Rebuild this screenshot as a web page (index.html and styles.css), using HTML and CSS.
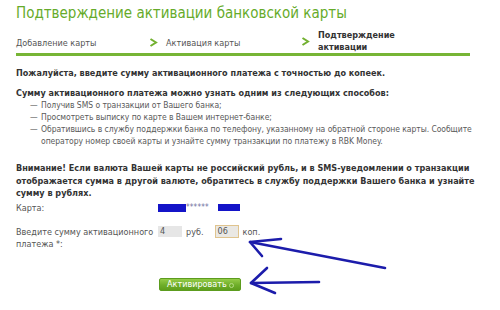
FILE: index.html
```html
<!DOCTYPE html>
<html lang="ru">
<head>
<meta charset="utf-8">
<title>Подтверждение активации банковской карты</title>
<link rel="stylesheet" href="styles.css">
</head>
<body>
<div class="page">
  <h1 class="title">Подтверждение активации банковской карты</h1>
  <div class="steps">
    <div class="step step-1">Добавление карты</div>
    <div class="step step-2">
      <svg class="chev" width="9" height="9" viewBox="0 0 9 9"><polyline points="1.5,1 7,4.5 1.5,8" fill="none" stroke="#72b030" stroke-width="2"/></svg>
      <span>Активация карты</span>
    </div>
    <div class="step step-3 current">
      <svg class="chev" width="9" height="9" viewBox="0 0 9 9"><polyline points="1.5,1 7,4.5 1.5,8" fill="none" stroke="#72b030" stroke-width="2"/></svg>
      <span>Подтверждение<br>активации</span>
    </div>
  </div>

  <p class="lead lead-1">Пожалуйста, введите сумму активационного платежа с точностью до копеек.</p>
  <p class="lead lead-2">Сумму активационного платежа можно узнать одним из следующих способов:</p>
  <ul class="ways">
    <li>Получив SMS о транзакции от Вашего банка;</li>
    <li>Просмотреть выписку по карте в Вашем интернет-банке;</li>
    <li>Обратившись в службу поддержки банка по телефону, указанному на обратной стороне карты. Сообщите оператору номер своей карты и узнайте сумму транзакции по платежу в RBK Money.</li>
  </ul>
  <p class="warn">Внимание! Если валюта Вашей карты не российский рубль, и в SMS-уведомлении о транзакции отображается сумма в другой валюте, обратитесь в службу поддержки Вашего банка и узнайте сумму в рублях.</p>

  <div class="form">
    <div class="row row-card">
      <div class="label">Карта:</div>
      <div class="value card-mask"><span class="blot blot-a"></span><span class="stars">******</span><span class="blot blot-b"></span></div>
    </div>
    <div class="row row-sum">
      <div class="label">Введите сумму активационного платежа *:</div>
      <div class="value sum">
        <span class="field field-rub">4</span>
        <span class="unit unit-rub">руб.</span>
        <span class="field field-kop">06</span>
        <span class="unit unit-kop">коп.</span>
      </div>
    </div>
    <div class="row row-btn">
      <div class="label"></div>
      <div class="value"><button class="btn" type="button">Активировать<span class="btn-dot"></span></button></div>
    </div>
  </div>

  <svg class="arrows" width="500" height="310" viewBox="0 0 500 310">
    <g fill="none" stroke="#1c1cab" stroke-width="2.6" stroke-linecap="round" stroke-linejoin="round">
      <polyline points="385,268 250,242"/>
      <polyline points="281,239 250,242 262,256"/>
      <polyline points="319,282 251,283"/>
      <polyline points="267,268 251,283 275,293"/>
    </g>
  </svg>
</div>
</body>
</html>
```

FILE: styles.css
```css
html, body {
  margin: 0;
  padding: 0;
  background: #ffffff;
}

.page {
  position: relative;
  width: 500px;
  height: 310px;
  padding: 0 16px;
  box-sizing: border-box;
  font-family: "DejaVu Sans Condensed", "DejaVu Sans", sans-serif;
  font-size: 9px;
  line-height: 12px;
  color: #555;
  overflow: hidden;
}

.title {
  margin: 0;
  padding-top: 3px;
  font-size: 15px;
  line-height: 20px;
  font-weight: normal;
  color: #66ab2a;
}

.steps {
  display: flex;
  align-items: center;
  width: 454px;
  height: 24px;
  margin-top: 6px;
  border-bottom: 3px solid #77b535;
  box-sizing: content-box;
  padding-bottom: 0;
  color: #555;
}

.step {
  display: flex;
  align-items: center;
}

.step-1 {
  width: 133px;
  padding-top: 3px;
}

.step-2 {
  width: 152px;
  padding-top: 3px;
}

.step-3 {
  flex: 1;
}

.chev {
  display: block;
  flex: 0 0 9px;
  margin-right: 8px;
}

.current {
  font-weight: bold;
  color: #333;
}

.lead {
  margin: 0;
  font-weight: bold;
  color: #333;
}

.lead-1 {
  margin-top: 11px;
}

.lead-2 {
  margin-top: 8px;
}

.ways {
  list-style: none;
  margin: 0;
  padding: 0 0 0 14px;
  font-size: 8.5px;
  letter-spacing: -0.05px;
  color: #5a5a5a;
}

.ways li {
  display: flex;
}

.ways li::before {
  content: "—";
  flex: 0 0 11px;
  color: #666;
}

.warn {
  margin: 15px 0 0;
  font-weight: bold;
  color: #333;
  line-height: 12.5px;
}

.form {
  margin-top: 2px;
}

.row {
  display: grid;
  grid-template-columns: 142px 1fr;
}

.row-sum {
  margin-top: 12px;
}

.row-btn {
  margin-top: 28px;
}

.label {
  width: 140px;
}

.card-mask {
  display: flex;
  align-items: center;
}

.blot {
  display: block;
  height: 8px;
  background: #1414c8;
}

.blot-a {
  width: 28px;
}

.blot-b {
  width: 22px;
  height: 7px;
}

.stars {
  width: 32px;
  font-size: 8px;
  letter-spacing: 0.2px;
  color: #7070a0;
  line-height: 8px;
}

.sum {
  display: flex;
  align-items: center;
  height: 12px;
}

.field {
  display: block;
  box-sizing: border-box;
  width: 24px;
  height: 11px;
  padding-left: 2px;
  line-height: 11px;
  background: #e6e6e6;
  color: #555;
}

.field-kop {
  height: 13px;
  line-height: 11px;
  border: 1px solid #e0c48e;
  background: #eae8e4;
}

.unit-rub {
  padding: 0 11px 0 4px;
}

.unit-kop {
  padding: 0 0 0 4px;
}

.btn {
  position: relative;
  display: block;
  width: 82px;
  height: 13px;
  margin-left: 1px;
  padding: 0;
  border: 1px solid #5c9c1e;
  border-radius: 2px;
  background: linear-gradient(#95cc48, #6fae2a 55%, #5e9e1c);
  color: #ffffff;
  font-family: "DejaVu Sans Condensed", "DejaVu Sans", sans-serif;
  font-size: 9px;
  line-height: 11px;
  text-align: left;
  text-indent: 7px;
}

.btn-dot {
  position: absolute;
  right: 6px;
  top: 4px;
  width: 3px;
  height: 3px;
  border: 1px solid #b5dc85;
  border-radius: 50%;
}

.arrows {
  position: absolute;
  left: 0;
  top: 0;
  pointer-events: none;
}
```
